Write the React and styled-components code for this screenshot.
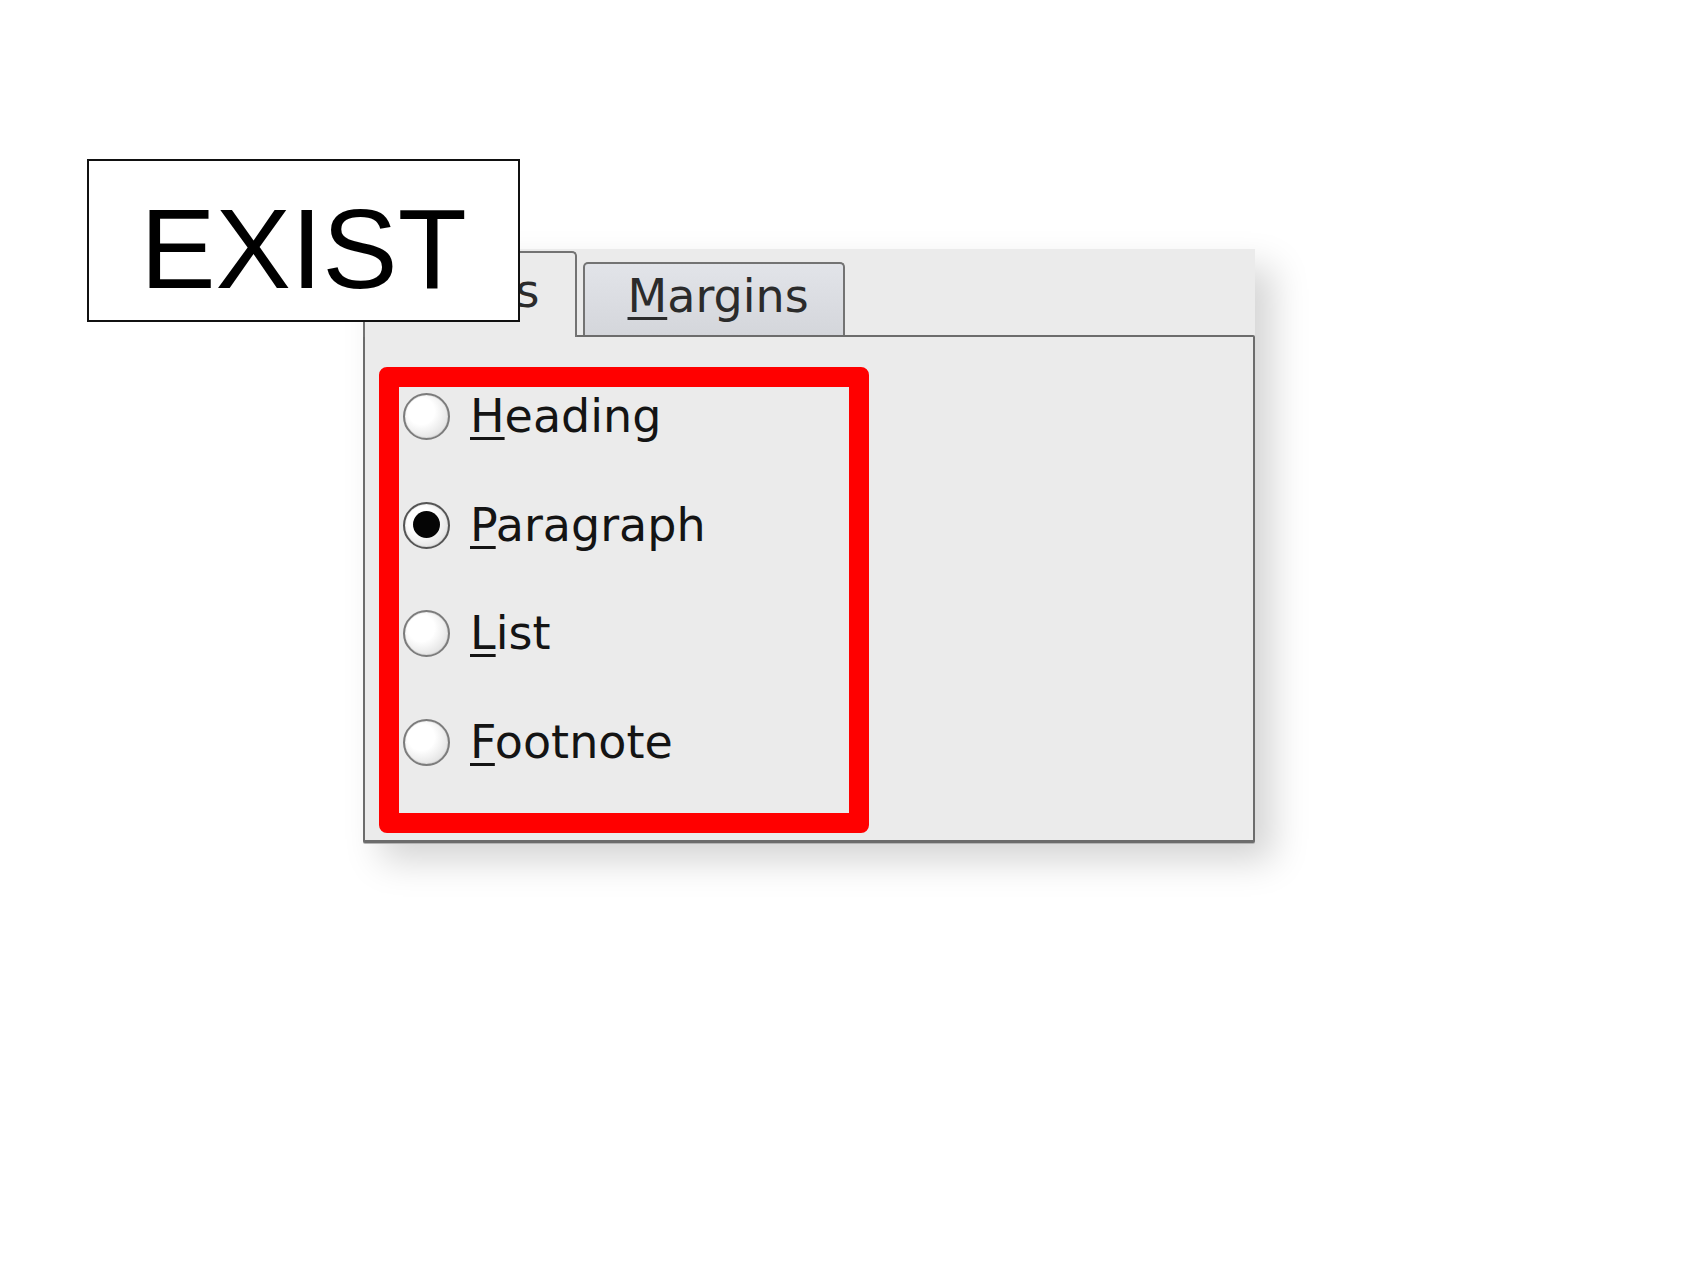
import React from "react";
import styled, { createGlobalStyle } from "styled-components";

const GlobalStyle = createGlobalStyle`
  html, body {
    margin: 0;
    padding: 0;
    background: #ffffff;
  }
`;

const Stage = styled.div`
  position: relative;
  min-height: 1265px;
  padding: 249px 0 0 363px;
  box-sizing: border-box;
  font-family: "DejaVu Sans", "Liberation Sans", sans-serif;
`;

const Label = styled.div`
  position: absolute;
  left: 87px;
  top: 159px;
  width: 433px;
  height: 163px;
  box-sizing: border-box;
  border: 2px solid #111;
  background: #fff;
  display: flex;
  justify-content: center;
  padding-top: 23px;
  font-family: "Liberation Sans", Arial, sans-serif;
  font-size: 113px;
  line-height: 130px;
  color: #000;
  z-index: 5;
`;

const TabWidget = styled.div`
  width: 892px;
  height: 594px;
  box-sizing: border-box;
  padding-top: 2px;
  background: #ebebeb;
  display: flex;
  flex-direction: column;
  box-shadow: 18px 18px 34px rgba(0, 0, 0, 0.17);
`;

const TabBar = styled.div`
  height: 84px;
  display: flex;
  align-items: flex-end;
  gap: 6px;
`;

const Tab = styled.div`
  position: relative;
  z-index: ${(p) => (p.$active ? 2 : 1)};
  box-sizing: border-box;
  height: ${(p) => (p.$active ? "86px" : "73px")};
  margin-bottom: ${(p) => (p.$active ? "-2px" : "0")};
  padding: ${(p) => (p.$active ? "12px 35px 0 35px" : "6px 34px 0 43px")};
  border: 2px solid #737373;
  border-bottom: none;
  border-radius: 5px 5px 0 0;
  background: ${(p) =>
    p.$active ? "#ebebeb" : "linear-gradient(#e2e4e9, #d4d6db)"};
  font-size: 46px;
  line-height: 53.5px;
  color: #2b2b2b;
  white-space: nowrap;
`;

const Key = styled.span`
  text-decoration: underline;
  text-decoration-thickness: 3px;
  text-underline-offset: 5px;
`;

const Pane = styled.div`
  flex: 1;
  box-sizing: border-box;
  border: 2px solid #6c6c6c;
  border-bottom-width: 3px;
  border-radius: 0 2px 2px 2px;
  background: #ebebeb;
  box-shadow: 0 1px 0 #b4b4b4;
`;

const Highlight = styled.div`
  margin: 30px 0 0 14px;
  width: 490px;
  height: 466px;
  box-sizing: border-box;
  border: 20px solid #ff0000;
  border-radius: 8px;
  padding: 6px 0 0 4px;
  display: flex;
  flex-direction: column;
  gap: 61.7px;
`;

const Row = styled.div`
  display: flex;
  align-items: center;
  gap: 20px;
  height: 47px;
`;

const Radio = styled.span`
  position: relative;
  flex: none;
  width: 47px;
  height: 47px;
  box-sizing: border-box;
  border-radius: 50%;
  border: 2.5px solid ${(p) => (p.$checked ? "#555" : "#7c7c7c")};
  background: radial-gradient(circle at 38% 38%, #ffffff 35%, #e4e4e4 75%, #d2d2d2 100%);
  box-shadow: inset 0 0 1px rgba(0, 0, 0, 0.35);

  &::after {
    content: "";
    display: ${(p) => (p.$checked ? "block" : "none")};
    position: absolute;
    left: 7.5px;
    top: 7.5px;
    width: 27px;
    height: 27px;
    border-radius: 50%;
    background: #050505;
  }
`;

const Caption = styled.span`
  font-size: 46px;
  line-height: 47px;
  color: #141414;
  white-space: nowrap;
`;

const options = [
  { key: "H", rest: "eading" },
  { key: "P", rest: "aragraph", checked: true },
  { key: "L", rest: "ist" },
  { key: "F", rest: "ootnote" },
];

export default function App() {
  return (
    <>
      <GlobalStyle />
      <Stage>
        <Label>EXIST</Label>
        <TabWidget>
          <TabBar>
            <Tab $active>
              <Key>S</Key>tyles
            </Tab>
            <Tab>
              <Key>M</Key>argins
            </Tab>
          </TabBar>
          <Pane>
            <Highlight>
              {options.map((o) => (
                <Row key={o.key}>
                  <Radio $checked={o.checked} />
                  <Caption>
                    <Key>{o.key}</Key>
                    {o.rest}
                  </Caption>
                </Row>
              ))}
            </Highlight>
          </Pane>
        </TabWidget>
      </Stage>
    </>
  );
}
